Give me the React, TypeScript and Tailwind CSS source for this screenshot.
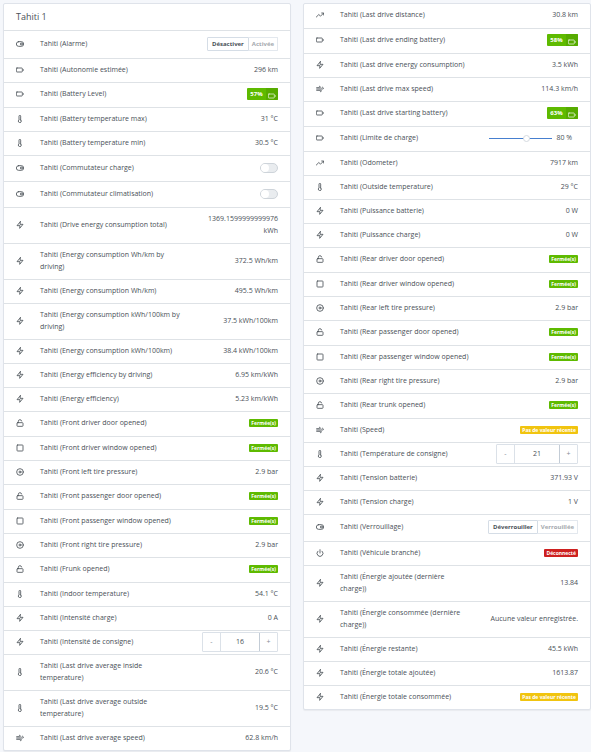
import React from 'react';
import {
  FiBattery,
  FiDisc,
  FiPower,
  FiSquare,
  FiThermometer,
  FiToggleRight,
  FiTrendingUp,
  FiUnlock,
  FiWind,
  FiZap
} from 'react-icons/fi';

const icons = {
  battery: FiBattery,
  tire: FiDisc,
  power: FiPower,
  window: FiSquare,
  temperature: FiThermometer,
  toggle: FiToggleRight,
  distance: FiTrendingUp,
  door: FiUnlock,
  speed: FiWind,
  energy: FiZap
};

type Feature = {
  icon: keyof typeof icons;
  name: string;
  kind?: 'text' | 'battery' | 'closed' | 'outdated' | 'unplugged' | 'switch' | 'buttons' | 'stepper' | 'slider';
  value?: string;
  options?: string[];
};

const leftFeatures: Feature[] = [
  { icon: 'toggle', name: 'Alarme', kind: 'buttons', options: ['Désactiver', 'Activée'] },
  { icon: 'battery', name: 'Autonomie estimée', value: '296 km' },
  { icon: 'battery', name: 'Battery Level', kind: 'battery', value: '57%' },
  { icon: 'temperature', name: 'Battery temperature max', value: '31 °C' },
  { icon: 'temperature', name: 'Battery temperature min', value: '30.5 °C' },
  { icon: 'toggle', name: 'Commutateur charge', kind: 'switch' },
  { icon: 'toggle', name: 'Commutateur climatisation', kind: 'switch' },
  { icon: 'energy', name: 'Drive energy consumption total', value: '1369.1599999999976 kWh' },
  { icon: 'energy', name: 'Energy consumption Wh/km by driving', value: '372.5 Wh/km' },
  { icon: 'energy', name: 'Energy consumption Wh/km', value: '495.5 Wh/km' },
  { icon: 'energy', name: 'Energy consumption kWh/100km by driving', value: '37.5 kWh/100km' },
  { icon: 'energy', name: 'Energy consumption kWh/100km', value: '38.4 kWh/100km' },
  { icon: 'energy', name: 'Energy efficiency by driving', value: '6.95 km/kWh' },
  { icon: 'energy', name: 'Energy efficiency', value: '5.23 km/kWh' },
  { icon: 'door', name: 'Front driver door opened', kind: 'closed' },
  { icon: 'window', name: 'Front driver window opened', kind: 'closed' },
  { icon: 'tire', name: 'Front left tire pressure', value: '2.9 bar' },
  { icon: 'door', name: 'Front passenger door opened', kind: 'closed' },
  { icon: 'window', name: 'Front passenger window opened', kind: 'closed' },
  { icon: 'tire', name: 'Front right tire pressure', value: '2.9 bar' },
  { icon: 'door', name: 'Frunk opened', kind: 'closed' },
  { icon: 'temperature', name: 'Indoor temperature', value: '54.1 °C' },
  { icon: 'energy', name: 'Intensité charge', value: '0 A' },
  { icon: 'energy', name: 'Intensité de consigne', kind: 'stepper', value: '16' },
  { icon: 'temperature', name: 'Last drive average inside temperature', value: '20.6 °C' },
  { icon: 'temperature', name: 'Last drive average outside temperature', value: '19.5 °C' },
  { icon: 'speed', name: 'Last drive average speed', value: '62.8 km/h' }
];

const rightFeatures: Feature[] = [
  { icon: 'distance', name: 'Last drive distance', value: '30.8 km' },
  { icon: 'battery', name: 'Last drive ending battery', kind: 'battery', value: '58%' },
  { icon: 'energy', name: 'Last drive energy consumption', value: '3.5 kWh' },
  { icon: 'speed', name: 'Last drive max speed', value: '114.3 km/h' },
  { icon: 'battery', name: 'Last drive starting battery', kind: 'battery', value: '63%' },
  { icon: 'battery', name: 'Limite de charge', kind: 'slider', value: '80' },
  { icon: 'distance', name: 'Odometer', value: '7917 km' },
  { icon: 'temperature', name: 'Outside temperature', value: '29 °C' },
  { icon: 'energy', name: 'Puissance batterie', value: '0 W' },
  { icon: 'energy', name: 'Puissance charge', value: '0 W' },
  { icon: 'door', name: 'Rear driver door opened', kind: 'closed' },
  { icon: 'window', name: 'Rear driver window opened', kind: 'closed' },
  { icon: 'tire', name: 'Rear left tire pressure', value: '2.9 bar' },
  { icon: 'door', name: 'Rear passenger door opened', kind: 'closed' },
  { icon: 'window', name: 'Rear passenger window opened', kind: 'closed' },
  { icon: 'tire', name: 'Rear right tire pressure', value: '2.9 bar' },
  { icon: 'door', name: 'Rear trunk opened', kind: 'closed' },
  { icon: 'speed', name: 'Speed', kind: 'outdated' },
  { icon: 'temperature', name: 'Température de consigne', kind: 'stepper', value: '21' },
  { icon: 'energy', name: 'Tension batterie', value: '371.93 V' },
  { icon: 'energy', name: 'Tension charge', value: '1 V' },
  { icon: 'toggle', name: 'Verrouillage', kind: 'buttons', options: ['Déverrouiller', 'Verrouillée'] },
  { icon: 'power', name: 'Véhicule branché', kind: 'unplugged' },
  { icon: 'energy', name: 'Énergie ajoutée (dernière charge)', value: '13.84' },
  { icon: 'energy', name: 'Énergie consommée (dernière charge)', value: 'Aucune valeur enregistrée.' },
  { icon: 'energy', name: 'Énergie restante', value: '45.5 kWh' },
  { icon: 'energy', name: 'Énergie totale ajoutée', value: '1613.87' },
  { icon: 'energy', name: 'Énergie totale consommée', kind: 'outdated' }
];

function rowHeight(feature: Feature) {
  if (feature.kind === 'buttons') return 'h-[27px]';
  if (feature.kind === 'switch') return 'h-[26px]';
  if (feature.kind === 'battery' || feature.kind === 'slider' || feature.icon === 'door') return 'h-[25px]';
  if (feature.name.length > 32 || (feature.value && feature.value.length > 20)) return 'h-9';
  return 'h-6';
}

function Badge({ color, children }: { color: string; children: React.ReactNode }) {
  return (
    <span className={`block px-[2px] rounded-[1px] text-[5px] leading-[8px] font-bold text-white whitespace-nowrap ${color}`}>
      {children}
    </span>
  );
}

function FeatureValue({ feature, id }: { feature: Feature; id: string }) {
  const { kind, value, options = [] } = feature;

  switch (kind) {
    case 'battery':
      return (
        <span className="flex h-3 rounded-[1px] overflow-hidden bg-[#5eba00] text-white">
          <span className="w-[19px] text-center text-[6px] leading-[12px] font-bold">{value}</span>
          <span className="w-3 flex items-end justify-center bg-[#56ab00]">
            <FiBattery className="w-2 h-2" />
          </span>
        </span>
      );
    case 'closed':
      return <Badge color="bg-[#5eba00]">Fermée(s)</Badge>;
    case 'outdated':
      return <Badge color="bg-[#f1c40f]">Pas de valeur récente</Badge>;
    case 'unplugged':
      return <Badge color="bg-[#cd201f]">Déconnecté</Badge>;
    case 'switch':
      return (
        <input
          id={id}
          type="checkbox"
          role="switch"
          className="appearance-none w-[18px] h-[10px] rounded-full border border-[#ced4da] bg-[#e9ecef] before:block before:w-2 before:h-2 before:rounded-full before:bg-white checked:bg-[#467fcf] checked:before:ml-2"
        />
      );
    case 'buttons':
      return (
        <div className="flex h-[14px] text-[6px] leading-[12px] font-bold whitespace-nowrap" role="group" aria-labelledby={id}>
          <button type="button" className="px-1 border border-[#d5dde6] rounded-l-[1px] text-[#495057]">
            {options[0]}
          </button>
          <button type="button" className="px-[3px] border border-l-0 border-[#e3e8ee] rounded-r-[1px] text-[#a4a9ae]">
            {options[1]}
          </button>
        </div>
      );
    case 'stepper':
      return (
        <div className="flex w-[82px] max-w-full h-5 border border-[#dbe1e8] rounded-[1px] text-[#495057]">
          <button type="button" aria-label="Diminuer" className="w-[18px] shrink-0 border-r border-[#dbe1e8] text-[#868e96]">
            -
          </button>
          <input id={id} type="text" defaultValue={value} className="flex-1 min-w-0 text-center bg-white" />
          <button type="button" aria-label="Augmenter" className="w-[18px] shrink-0 border-l border-[#c3ccd6] text-[#868e96]">
            +
          </button>
        </div>
      );
    case 'slider':
      return (
        <div className="flex items-center gap-1 pr-[6px]">
          <input
            id={id}
            type="range"
            min="50"
            max="100"
            defaultValue={value}
            className="appearance-none w-[63px] h-[7px] bg-transparent [&::-webkit-slider-runnable-track]:h-px [&::-webkit-slider-runnable-track]:bg-[#467fcf] [&::-webkit-slider-thumb]:appearance-none [&::-webkit-slider-thumb]:w-[7px] [&::-webkit-slider-thumb]:h-[7px] [&::-webkit-slider-thumb]:-mt-[3px] [&::-webkit-slider-thumb]:rounded-full [&::-webkit-slider-thumb]:border [&::-webkit-slider-thumb]:border-[#d5dae0] [&::-webkit-slider-thumb]:bg-white"
          />
          <span className="whitespace-nowrap">{value} %</span>
        </div>
      );
    default:
      return <span>{value}</span>;
  }
}

function FeatureRow({ feature, id, first }: { feature: Feature; id: string; first: boolean }) {
  const Icon = icons[feature.icon];
  const label = `Tahiti (${feature.name})`;
  const cell = `p-0 pb-[2px] align-middle font-normal ${first ? '' : 'border-t border-[#dee2e6]'}`;
  const hasInput = feature.kind === 'switch' || feature.kind === 'stepper' || feature.kind === 'slider';

  return (
    <tr className={rowHeight(feature)}>
      <td className={`${cell} pl-3`}>
        <Icon className="w-2 h-2 text-[#495057]" strokeWidth={2.5} />
      </td>
      <th scope="row" className={`${cell} text-left`}>
        {hasInput ? (
          <label htmlFor={id} className="block">{label}</label>
        ) : (
          <span id={id} className="block">{label}</span>
        )}
      </th>
      <td className={`${cell} pl-4 pr-3 text-right`}>
        <div className="flex justify-end">
          <FeatureValue feature={feature} id={id} />
        </div>
      </td>
    </tr>
  );
}

function DeviceCard({ title, features, prefix, valueColumn }: { title?: string; features: Feature[]; prefix: string; valueColumn: string }) {
  return (
    <section className="bg-white border border-[#dfe3ea] rounded-[2px] shadow-[0_1px_1px_rgba(0,0,0,0.05)]">
      {title && (
        <h3 className="h-[27px] px-3 flex items-center border-b border-[#dee2e6] text-[9px]">{title}</h3>
      )}
      <table className="w-full table-fixed border-separate border-spacing-0">
        <colgroup>
          <col className="w-9" />
          <col />
          <col className={valueColumn} />
        </colgroup>
        <tbody>
          {features.map((feature, index) => (
            <FeatureRow key={feature.name} feature={feature} id={`${prefix}-${index}`} first={index === 0} />
          ))}
        </tbody>
      </table>
    </section>
  );
}

export default function App() {
  return (
    <main className="min-h-screen bg-[#f5f7fb] pt-[3px] pl-[3px] grid grid-cols-2 gap-3 items-start font-['Open_Sans',sans-serif] text-[7px] leading-[12px] text-[#495057]">
      <DeviceCard title="Tahiti 1" features={leftFeatures} prefix="left" valueColumn="w-[104px]" />
      <DeviceCard features={rightFeatures} prefix="right" valueColumn="w-[119px]" />
    </main>
  );
}
